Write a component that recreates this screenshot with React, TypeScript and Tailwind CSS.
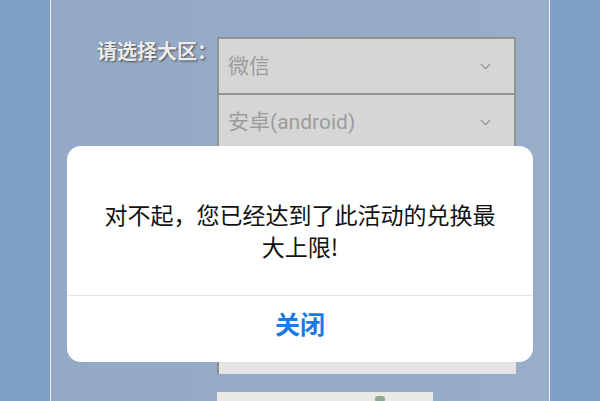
import { ChevronDown } from 'lucide-react';

const CJK = "font-['Noto_Sans_CJK_SC','Noto_Sans',sans-serif]";

function SelectBox({ label }: { label: string }) {
  return (
    <div className="flex h-[56px] w-[299px] items-center justify-between border-l-2 border-r-2 border-t-2 border-[#939393] bg-[#d6d6d6] pl-[9px] pr-[20px]">
      <span className="font-['Roboto','Noto_Sans_CJK_SC',sans-serif] text-[21px] leading-none text-[#9c9c9c]">{label}</span>
      <ChevronDown className="h-[17px] w-[17px] text-[#8a8a8a]" strokeWidth={1.6} />
    </div>
  );
}

export default function App() {
  return (
    <div className={`relative flex h-[401px] w-full justify-center overflow-hidden bg-[#7f9fc6] ${CJK}`}>
      <div className="h-full w-[500px] border-x border-[#e6edf5] bg-gradient-to-r from-[#93a9c6] to-[#97adc8]">
        <div className="flex pt-[37px]">
          <div className="w-[166px] pl-[46px] pt-[2px] text-[20px] font-bold leading-[24px] text-[#ececec] [text-shadow:1px_1px_2px_#4a4a4a]">
            请选择大区：
          </div>
          <div className="flex flex-col">
            <SelectBox label="微信" />
            <SelectBox label="安卓(android)" />
            <div className="h-[169px] w-[299px] border-x-2 border-[#939393] bg-[#d6d6d6]" />
            <div className="h-[56px] w-[299px] border-l-2 border-t-2 border-[#8c8c8c] bg-[#e4e4e4]" />
            <div className="mt-[18px] flex h-[40px] w-[216px] items-start justify-end bg-[#ebe9e4] pr-[48px] pt-[4px]">
              <span className="h-[6px] w-[10px] rounded-full bg-[#8fa896]" />
            </div>
          </div>
        </div>
      </div>

      <div className="absolute inset-0 flex justify-center pt-[146px]">
        <div className="h-[216px] w-[466px] overflow-hidden rounded-[14px] bg-white">
          <div className="h-[149px] px-[32px] pt-[52px] text-center text-[23px] leading-[32px] text-[#111]">
            对不起，您已经达到了此活动的兑换最大上限!
          </div>
          <div className="flex h-[67px] items-center justify-center border-t border-[#e3e3e3] pb-[10px] text-[25px] font-bold text-[#1a7ae6]">
            关闭
          </div>
        </div>
      </div>
    </div>
  );
}
